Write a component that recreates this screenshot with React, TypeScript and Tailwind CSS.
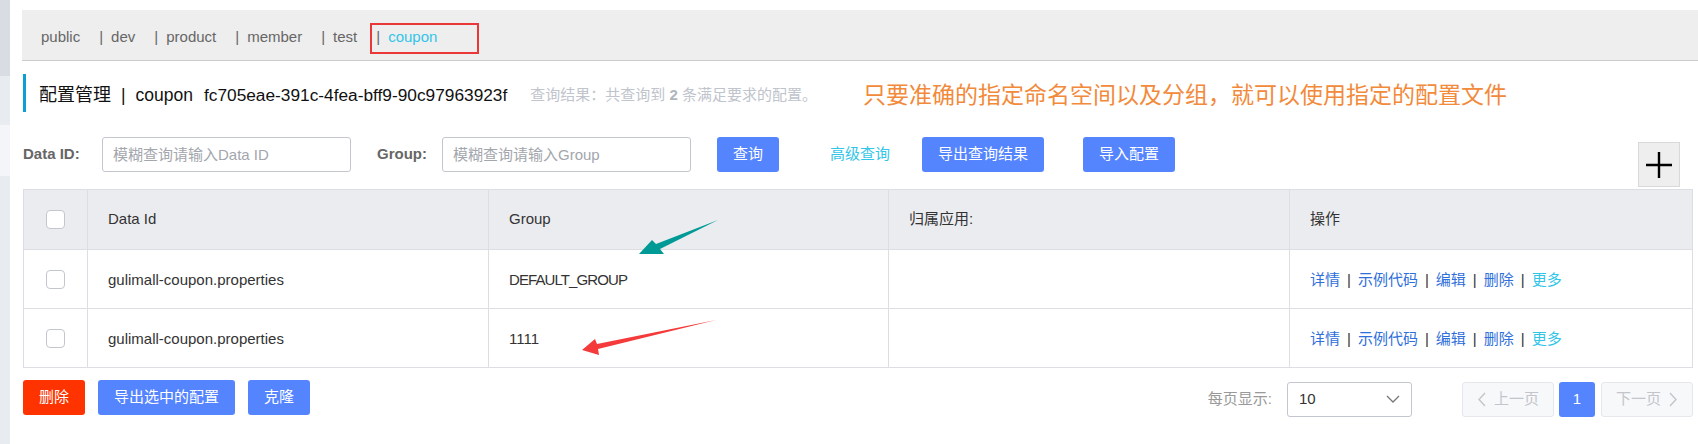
import React from "react";

const tabs = ["dev", "product", "member", "test"];

const rows = [
  { id: "gulimall-coupon.properties", group: "DEFAULT_GROUP", tight: true },
  { id: "gulimall-coupon.properties", group: "1111", tight: false },
];

const Checkbox = () => (
  <div className="w-[19px] h-[19px] rounded-[4px] border border-[#c4c6cf] bg-white" />
);

const cols = "grid grid-cols-[64px_401px_400px_401px_1fr]";
const cell = "flex items-center px-5 border-r border-[#dcdee3]";

const Actions = () => (
  <div className="flex items-center text-[#2f6fdb]">
    <span>详情</span>
    <span className="mx-[7px] text-[#333]">|</span>
    <span>示例代码</span>
    <span className="mx-[7px] text-[#333]">|</span>
    <span>编辑</span>
    <span className="mx-[7px] text-[#333]">|</span>
    <span>删除</span>
    <span className="mx-[7px] text-[#333]">|</span>
    <span className="text-[#33c5e8]">更多</span>
  </div>
);

const App = () => {
  return (
    <div className="relative flex min-h-[444px] w-full bg-white text-[15px] text-[#333] font-['Liberation_Sans','Noto_Sans_CJK_SC',sans-serif]">
      <div className="flex w-[10px] shrink-0 flex-col">
        <div className="h-[76px] bg-[#d9dde3]" />
        <div className="h-[49px] bg-[#e8ebf0]" />
        <div className="h-[51px] bg-[#f3f5f8]" />
        <div className="flex-1 bg-[#e8ebf0]" />
      </div>

      <div className="flex-1 pl-[13px] pr-[5px] pt-[10px]">
        {/* namespace tabs */}
        <div className="-mr-[5px] -ml-[1px] flex h-[51px] items-center border-b border-[#cccccc] bg-[#eeeeee] pl-[19px] pt-[4px] text-[#666]">
          <span>public</span>
          {tabs.map((t) => (
            <span key={t} className="ml-[19px] flex items-center">
              <span className="mr-[8px]">|</span>
              {t}
            </span>
          ))}
          <span className="relative ml-[19px] flex items-center">
            <span className="mr-[8px]">|</span>
            <span className="text-[#33c5e8]">coupon</span>
            <div className="absolute -left-[6px] -top-[3px] h-[31px] w-[109px] border-2 border-[#ea3838]" />
          </span>
        </div>

        {/* title */}
        <div className="mt-[13px] flex h-[38px] items-center border-l-[3px] border-[#0e9ed6] pl-[13px] pt-[5px]">
          <span className="text-[18px] text-[#111]">配置管理</span>
          <span className="mx-[10px] text-[17.5px] text-[#111]">|</span>
          <span className="text-[17.5px] text-[#111]">coupon</span>
          <span className="ml-[11px] text-[17.3px] text-[#111]">fc705eae-391c-4fea-bff9-90c97963923f</span>
          <span className="ml-[23px] text-[15px] text-[#c0c4cc]">
            查询结果：共查询到 <b className="text-[#b0b4bc]">2</b> 条满足要求的配置。
          </span>
          <span className="ml-[46px] text-[23px] text-[#f28a3c]">
            只要准确的指定命名空间以及分组，就可以使用指定的配置文件
          </span>
        </div>

        {/* filters */}
        <div className="mt-[25px] flex items-start">
          <span className="flex h-[35px] w-[64px] items-center font-bold text-[#666]">Data ID:</span>
          <input
            readOnly
            placeholder="模糊查询请输入Data ID"
            className="ml-[15px] h-[35px] w-[249px] rounded-[3px] border border-[#c4c6cf] px-[10px] text-[15px] outline-none placeholder:text-[#a3a6ad]"
          />
          <span className="ml-[26px] flex h-[35px] items-center font-bold text-[#666]">Group:</span>
          <input
            readOnly
            placeholder="模糊查询请输入Group"
            className="ml-[15px] h-[35px] w-[249px] rounded-[3px] border border-[#c4c6cf] px-[10px] text-[15px] outline-none placeholder:text-[#a3a6ad]"
          />
          <button className="ml-[26px] h-[35px] rounded-[3px] bg-[#5584ff] px-4 text-white">查询</button>
          <span className="ml-[51px] flex h-[35px] items-center text-[#33c5e8]">高级查询</span>
          <button className="ml-[32px] h-[35px] rounded-[3px] bg-[#5584ff] px-4 text-white">导出查询结果</button>
          <button className="ml-[39px] h-[35px] rounded-[3px] bg-[#5584ff] px-4 text-white">导入配置</button>
          <div className="ml-auto mr-[13px] mt-[5px] flex h-[45px] w-[42px] items-center justify-center border border-[#d9d9d9] bg-[#eeeeee]">
            <svg width="26" height="26" viewBox="0 0 26 26">
              <path d="M13 0v26M0 13h26" stroke="#000" strokeWidth="2.4" />
            </svg>
          </div>
        </div>

        {/* table */}
        <div className="mt-[2px] border border-[#dcdee3]">
          <div className={`${cols} h-[60px] border-b border-[#dcdee3] bg-[#ebecf0]`}>
            <div className="flex items-center justify-center border-r border-[#dcdee3]">
              <Checkbox />
            </div>
            <div className={cell}>Data Id</div>
            <div className={cell}>Group</div>
            <div className={cell}>归属应用:</div>
            <div className="flex items-center px-5">操作</div>
          </div>
          {rows.map((r, i) => (
            <div
              key={i}
              className={`${cols} ${i < rows.length - 1 ? "h-[59px] border-b border-[#dcdee3]" : "h-[58px]"}`}
            >
              <div className="flex items-center justify-center border-r border-[#dcdee3]">
                <Checkbox />
              </div>
              <div className={`${cell} pt-[2px]`}>{r.id}</div>
              <div className={`${cell} pt-[2px]`}>
                <span className={r.tight ? "tracking-[-0.9px]" : ""}>{r.group}</span>
              </div>
              <div className={cell} />
              <div className="flex items-center px-5 pt-[2px]">
                <Actions />
              </div>
            </div>
          ))}
        </div>

        {/* footer */}
        <div className="mt-[12px] flex items-start">
          <button className="h-[35px] rounded-[3px] bg-[#ff3300] px-4 text-white">删除</button>
          <button className="ml-[13px] h-[35px] rounded-[3px] bg-[#5584ff] px-4 text-white">导出选中的配置</button>
          <button className="ml-[13px] h-[35px] rounded-[3px] bg-[#5584ff] px-4 text-white">克隆</button>

          <div className="ml-auto mt-[2px] flex items-center">
            <span className="text-[#999]">每页显示:</span>
            <div className="ml-[15px] flex h-[35px] w-[125px] items-center justify-between rounded-[3px] border border-[#c4c6cf] pl-[11px] pr-[11px]">
              <span className="text-[#333]">10</span>
              <svg width="14" height="9" viewBox="0 0 14 9">
                <path d="M1 1l6 6 6-6" fill="none" stroke="#777" strokeWidth="1.3" />
              </svg>
            </div>
            <div className="ml-[50px] flex h-[35px] w-[92px] items-center justify-center rounded-[3px] border border-[#e6e7eb] bg-[#f7f8fa] text-[#c3c5ca]">
              <svg width="10" height="15" viewBox="0 0 10 15" className="mr-[7px]">
                <path d="M8 1L2 7.5 8 14" fill="none" stroke="#c3c5ca" strokeWidth="1.4" />
              </svg>
              上一页
            </div>
            <div className="ml-[5px] flex h-[35px] w-[36px] items-center justify-center rounded-[3px] bg-[#5584ff] text-white">
              1
            </div>
            <div className="ml-[6px] flex h-[35px] w-[92px] items-center justify-center rounded-[3px] border border-[#e6e7eb] bg-[#f7f8fa] text-[#c3c5ca]">
              下一页
              <svg width="10" height="15" viewBox="0 0 10 15" className="ml-[7px]">
                <path d="M2 1l6 6.5L2 14" fill="none" stroke="#c3c5ca" strokeWidth="1.4" />
              </svg>
            </div>
          </div>
        </div>
      </div>

      {/* annotation arrows */}
      <svg className="pointer-events-none absolute left-0 top-0" width="1698" height="444">
        <polygon points="639,254 652,240 656,244 718,220 660,249 664,254" fill="#009a96" />
        <polygon points="582,350 595,339 597,344 716,320 598,349 599,355" fill="#f43a3a" />
      </svg>
    </div>
  );
};

export default App;
